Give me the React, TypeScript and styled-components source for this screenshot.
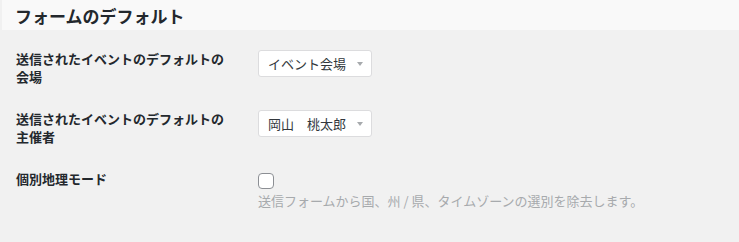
import React from 'react';
import styled, { createGlobalStyle } from 'styled-components';

const GlobalStyle = createGlobalStyle`
  html, body {
    margin: 0;
    padding: 0;
    background: #f1f1f1;
  }
  body {
    font-family: "Noto Sans CJK JP", "Noto Sans", sans-serif;
    color: #23282d;
  }
`;

const Page = styled.div`
  min-height: 242px;
  padding-left: 2px;
`;

const SectionHeader = styled.div`
  height: 30px;
  background: #f9f9f9;
  display: flex;
  align-items: center;
  padding-left: 13px;
`;

const SectionTitle = styled.h2`
  margin: 0;
  font-size: 17px;
  font-weight: 600;
  line-height: 1;
  color: #23282d;
`;

const Rows = styled.div`
  padding: 20px 0 0 14px;
`;

const Row = styled.div`
  display: grid;
  grid-template-columns: 242px 1fr;
  align-items: start;
  padding-bottom: 24px;
`;

const Label = styled.div`
  max-width: 215px;
  font-size: 13px;
  line-height: 18px;
  font-weight: 600;
  color: #23282d;
`;

const Control = styled.div`
  display: flex;
  flex-direction: column;
  align-items: flex-start;
`;

const SelectBox = styled.div`
  box-sizing: border-box;
  width: 114px;
  height: 27px;
  display: flex;
  align-items: center;
  justify-content: space-between;
  padding: 0 8px 0 9px;
  background: #fff;
  border: 1px solid #dcdcde;
  border-radius: 3px;
  font-size: 13px;
  color: #32373c;
  white-space: pre;
`;

const Arrow = styled.svg`
  width: 6px;
  height: 4px;
  fill: #a7aaad;
`;

const Checkbox = styled.span`
  box-sizing: border-box;
  display: block;
  width: 16px;
  height: 16px;
  margin-top: 3px;
  background: #fff;
  border: 1px solid #8c8f94;
  border-radius: 4px;
`;

const Description = styled.p`
  margin: 3px 0 0;
  font-size: 13px;
  line-height: 18px;
  color: #a7aaad;
`;

const Select: React.FC<{ value: string }> = ({ value }) => (
  <SelectBox>
    <span>{value}</span>
    <Arrow viewBox="0 0 6 4">
      <polygon points="0,0 6,0 3,4" />
    </Arrow>
  </SelectBox>
);

const App: React.FC = () => {
  return (
    <>
      <GlobalStyle />
      <Page>
        <SectionHeader>
          <SectionTitle>フォームのデフォルト</SectionTitle>
        </SectionHeader>
        <Rows>
          <Row>
            <Label>送信されたイベントのデフォルトの会場</Label>
            <Control>
              <Select value="イベント会場" />
            </Control>
          </Row>
          <Row>
            <Label>送信されたイベントのデフォルトの主催者</Label>
            <Control>
              <Select value="岡山　桃太郎" />
            </Control>
          </Row>
          <Row>
            <Label>個別地理モード</Label>
            <Control>
              <Checkbox />
              <Description>
                送信フォームから国、州 / 県、タイムゾーンの選別を除去します。
              </Description>
            </Control>
          </Row>
        </Rows>
      </Page>
    </>
  );
};

export default App;
